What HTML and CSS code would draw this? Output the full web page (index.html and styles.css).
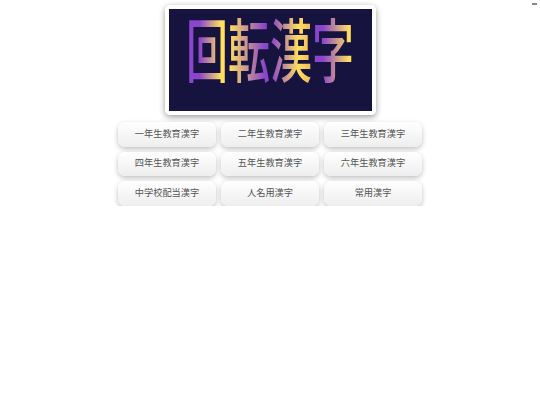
FILE: index.html
```html
<!DOCTYPE html>
<html lang="ja">
<head>
    <meta charset="UTF-8">
    <title>回転漢字</title>
    <link rel="stylesheet" href="styles.css">
</head>
<body>
    <div class="menu-mark"></div>
    <div class="container">
        <div class="logo-card">
            <div class="logo">
                <span class="logo-text">回転漢字</span>
            </div>
        </div>
        <div class="grades">
            <button>一年生教育漢字</button>
            <button>二年生教育漢字</button>
            <button>三年生教育漢字</button>
            <button>四年生教育漢字</button>
            <button>五年生教育漢字</button>
            <button>六年生教育漢字</button>
            <button>中学校配当漢字</button>
            <button>人名用漢字</button>
            <button>常用漢字</button>
        </div>
    </div>
</body>
</html>
```

FILE: styles.css
```css
body {
    margin: 0;
    background-color: #fff;
    font-family: "Liberation Serif", "Noto Sans CJK JP", serif;
}

.menu-mark {
    position: absolute;
    top: 3px;
    right: 3px;
    width: 5px;
    height: 2px;
    background-color: #888;
}

.container {
    display: flex;
    flex-direction: column;
    align-items: center;
    padding-top: 5px;
}

.logo-card {
    width: 203px;
    height: 102px;
    border: 4px solid #fff;
    border-radius: 5px;
    box-shadow: 0 2px 6px rgba(0, 0, 0, 0.4);
}

.logo {
    height: 100%;
    display: flex;
    justify-content: center;
    align-items: flex-start;
    background-color: #16143f;
}

.logo-text {
    margin-top: 8px;
    padding: 0 4px;
    font-family: "Noto Sans CJK JP", sans-serif;
    font-size: 42px;
    font-weight: 500;
    line-height: 60px;
    white-space: nowrap;
    transform: scaleY(1.66);
    background: linear-gradient(90deg, #8b45cc 4%, #8b45cc 10%, #ffdf5e 22%, #ffdf5e 27%, #8b45cc 47%, #8b45cc 51%, #ffdf5e 66%, #f0b860 73%, #8b45cc 76%, #8b45cc 80%, #ffdf5e 95%);
    -webkit-background-clip: text;
    background-clip: text;
    color: transparent;
}

.grades {
    margin-top: 7px;
    display: grid;
    grid-template-columns: repeat(3, 98px);
    grid-auto-rows: 24.5px;
    gap: 5px;
}

button {
    padding: 0 0 3px;
    border: none;
    border-radius: 7px;
    background: linear-gradient(#fff, #eee);
    box-shadow: 0 2px 5px rgba(0, 0, 0, 0.25);
    color: #555;
    font-family: "Noto Sans CJK JP", sans-serif;
    font-size: 9.2px;
}
```
